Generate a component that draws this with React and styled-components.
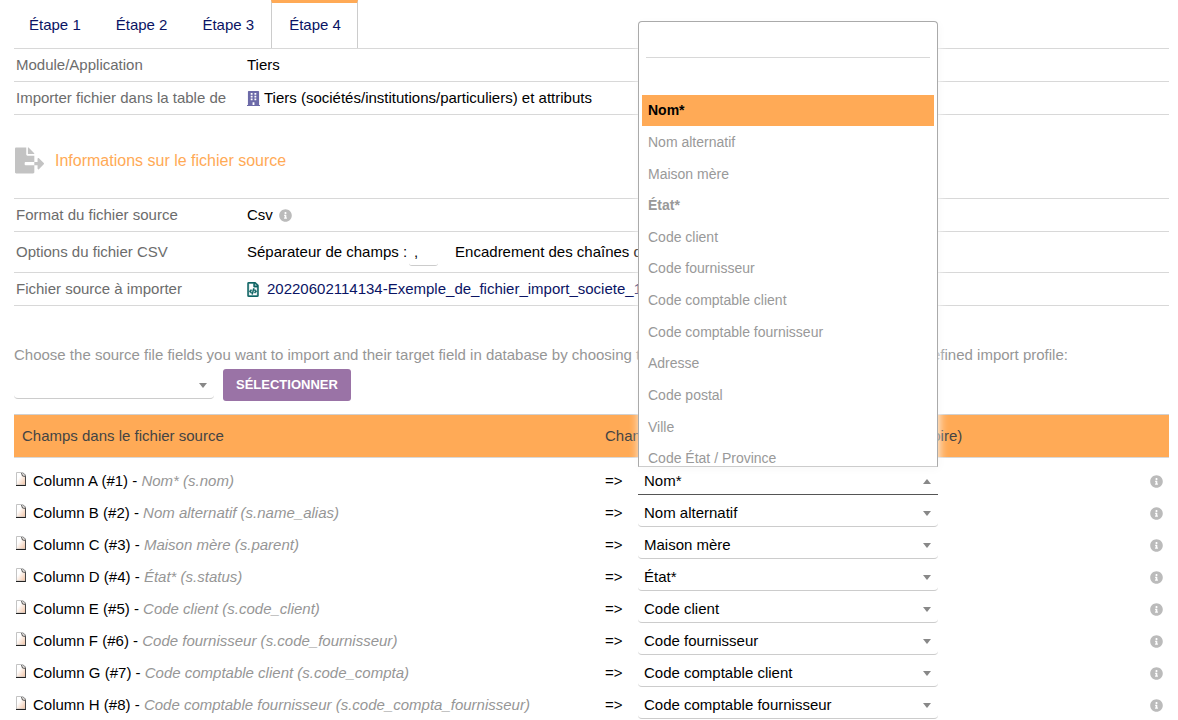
import React, { useState } from 'react'
import styled, { createGlobalStyle } from 'styled-components'
import { FaBuilding, FaFileExport, FaInfoCircle, FaRegFileCode } from 'react-icons/fa'

const GlobalStyle = createGlobalStyle`
  * {
    box-sizing: border-box;
  }

  body {
    margin: 0;
    background: #fff;
    color: #000;
    font: 15px/20px "Liberation Sans", Arial, sans-serif;
  }

  input, select, button {
    font: inherit;
    color: inherit;
  }
`

const Page = styled.main`
  padding: 0 9px 0 14px;
`

const Tabs = styled.nav`
  display: flex;
  margin: 0 -3px;
`

const TabLink = styled.a`
  height: 48px;
  padding: 12px 16px 0 17px;
  border-top: 3px solid ${({ $active }) => ($active ? '#ffaa56' : 'transparent')};
  border-left: 1px solid ${({ $active }) => ($active ? '#ccc' : 'transparent')};
  border-right: 1px solid ${({ $active }) => ($active ? '#ccc' : 'transparent')};
  color: #0a1464;
  text-decoration: none;
`

const InfoTable = styled.table`
  width: 100%;
  border-collapse: separate;
  border-spacing: 0;
  border-top: 1px solid #d8d8d8;

  th, td {
    height: 33px;
    padding: 0 2px;
    border-bottom: 1px solid #d8d8d8;
    text-align: left;
    font-weight: normal;
    white-space: nowrap;
  }

  th {
    width: 20%;
    color: #6c6c6c;
  }

  tr.tall > * {
    height: 41px;
  }
`

const Inline = styled.div`
  display: flex;
  align-items: center;
  gap: ${({ $gap }) => $gap}px;
`

const BuildingIcon = styled(FaBuilding)`
  width: 13px;
  height: 15px;
  color: #6c6aa8;
`

const FileCodeIcon = styled(FaRegFileCode)`
  width: 12px;
  height: 15px;
  color: #0f6464;
  stroke-width: 14px;
`

const SectionTitle = styled.h2`
  display: flex;
  align-items: center;
  gap: 11px;
  height: 83px;
  margin: 0;
  padding: 8px 0 0 1px;
  color: #ffaa56;
  font-size: 16px;
  font-weight: normal;
  line-height: 20px;

  svg {
    color: #c3c3c3;
  }
`

const CharInput = styled.input`
  width: 29px;
  height: 28px;
  margin: 0 17px 0 2px;
  padding: 0 5px;
  border: 0;
  border-bottom: 1px solid #ccc;
  border-radius: 3px;
  background: transparent;
`

const FileLink = styled.a`
  color: #0a1464;
  text-decoration: none;
`

const Hint = styled.p`
  margin: 39px 0 0;
  color: #969696;
`

const ProfileForm = styled.form`
  display: flex;
  align-items: center;
  gap: 9px;
  margin: 4px 0 13px;
`

const SubmitButton = styled.button`
  height: 32px;
  padding: 0 13px;
  border: 0;
  border-radius: 3px;
  background: #9a73a6;
  color: #fff;
  font-size: 13px;
  font-weight: bold;
  text-transform: uppercase;
`

const SelectBox = styled.div`
  position: relative;
  display: grid;
  align-items: center;
  width: ${({ $width }) => $width}px;

  > * {
    grid-area: 1 / 1;
  }
`

const Select = styled.select`
  width: 100%;
  height: 28px;
  padding: 0 24px 0 6px;
  appearance: none;
  border: 0;
  border-bottom: 1px solid ${({ $open }) => ($open ? '#555' : '#ccc')};
  border-radius: ${({ $open }) => ($open ? 0 : 4)}px;
  background: transparent;
  outline: none;
`

const Arrow = styled.span`
  justify-self: end;
  margin-right: 7px;
  border: 4px solid transparent;
  border-width: ${({ $up }) => ($up ? '0 4px 5px' : '5px 4px 0')};
  border-top-color: ${({ $up }) => ($up ? 'transparent' : '#888')};
  border-bottom-color: ${({ $up }) => ($up ? '#888' : 'transparent')};
  pointer-events: none;
`

const Dropdown = styled.div`
  position: absolute;
  z-index: 10;
  bottom: 100%;
  left: 0;
  width: 100%;
  height: 446px;
  overflow: hidden;
  border: 1px solid #aaa;
  border-bottom-color: #ccc;
  border-radius: 4px 4px 0 0;
  background: #fff;
  box-shadow: 1px 2px 10px #f8f8f8;
`

const Search = styled.input`
  display: block;
  width: calc(100% - 14px);
  height: 30px;
  margin: 6px 7px 5px;
  border: 0;
  border-bottom: 1px solid #d8d8d8;
  outline: none;
`

const Options = styled.ul`
  display: grid;
  grid-auto-rows: 1fr;
  height: 411px;
  margin: 0 3px;
  padding: 0;
  list-style: none;
`

const Option = styled.li`
  display: flex;
  align-items: center;
  padding: 0 6px;
  background: ${({ $active }) => ($active ? '#ffaa56' : 'transparent')};
  color: ${({ $active }) => ($active ? '#000' : '#999')};
  font-size: 14px;
  font-weight: ${({ $bold }) => ($bold ? 'bold' : 'normal')};
`

const MappingTable = styled.table`
  width: 100%;
  table-layout: fixed;
  border-collapse: separate;
  border-spacing: 0;

  td {
    height: 32px;
    padding: 0;
  }

  td:first-child {
    padding-left: 2px;
  }

  tbody::before {
    content: '';
    display: block;
    height: 7px;
  }
`

const Col = styled.col`
  width: ${({ $width }) => $width};
`

const HeadCell = styled.th`
  height: 44px;
  padding: 0 0 0 ${({ $indent }) => $indent || 0}px;
  border-top: 1px solid #d0d0d0;
  border-bottom: 1px solid #d8d8d8;
  background: #ffaa56;
  color: #444;
  font-weight: normal;
  text-align: left;
`

const SourceField = styled(Inline)`
  svg {
    margin-bottom: 4px;
  }
`

const Muted = styled.i`
  color: #969696;
`

const InfoCell = styled.td`
  svg {
    display: block;
    margin: 1px 6px 0 auto;
    color: #bbb;
  }
`

const PageGlyph = () => (
  <svg width="11" height="14" viewBox="0 0 11 14" aria-hidden="true">
    <defs>
      <linearGradient id="paper" x1="0" y1="0" x2="1" y2="1">
        <stop offset="0.35" stopColor="#fff" />
        <stop offset="1" stopColor="#f0c0a0" />
      </linearGradient>
    </defs>
    <path d="M.5.5h5.500l3.500 3.500v9h-9z" fill="url(#paper)" stroke="#c4c4c4" />
    <path d="M0 13.500h10" fill="none" stroke="#222" />
    <path d="M9.500 13.500v-10" fill="none" stroke="#444" />
    <path d="M5.500 1l1 3 3.500.5" fill="none" stroke="#555" />
    <path d="M6.500.5l3.500 3" fill="none" stroke="#888" />
  </svg>
)

const FIELDS = [
  { label: 'Nom*', column: 's.nom', bold: true },
  { label: 'Nom alternatif', column: 's.name_alias' },
  { label: 'Maison mère', column: 's.parent' },
  { label: 'État*', column: 's.status', bold: true },
  { label: 'Code client', column: 's.code_client' },
  { label: 'Code fournisseur', column: 's.code_fournisseur' },
  { label: 'Code comptable client', column: 's.code_compta' },
  { label: 'Code comptable fournisseur', column: 's.code_compta_fournisseur' },
  { label: 'Adresse' },
  { label: 'Code postal' },
  { label: 'Ville' },
  { label: 'Code État / Province' },
]

const STEPS = [1, 2, 3, 4]

const FieldSelect = ({ label, width, value, onChange, open, children }) => (
  <SelectBox $width={width}>
    <Select aria-label={label} value={value} onChange={onChange} $open={open}>
      <option value="" />
      {FIELDS.map(field => <option key={field.label}>{field.label}</option>)}
    </Select>
    <Arrow $up={open} />
    {children}
  </SelectBox>
)

const FieldDropdown = ({ value, onPick }) => (
  <Dropdown>
    <Search type="search" aria-label="Rechercher un champ" />
    <Options role="listbox" aria-label="Champs cibles">
      <Option role="option" />
      {FIELDS.map(({ label, bold }) => (
        <Option
          key={label}
          role="option"
          aria-selected={label === value}
          $active={label === value}
          $bold={bold}
          onClick={() => onPick(label)}
        >
          {label}
        </Option>
      ))}
    </Options>
  </Dropdown>
)

const App = () => {
  const rows = FIELDS.filter(field => field.column)
  const [targets, setTargets] = useState(rows.map(row => row.label))
  const [openRow, setOpenRow] = useState(0)
  const [profile, setProfile] = useState('')

  const setTarget = (index, label) =>
    setTargets(targets.map((target, i) => (i === index ? label : target)))

  return (
    <Page>
      <GlobalStyle />
      <Tabs>
        {STEPS.map(step => (
          <TabLink key={step} href={`#step${step}`} $active={step === 4}>Étape {step}</TabLink>
        ))}
      </Tabs>

      <InfoTable>
        <tbody>
          <tr>
            <th scope="row">Module/Application</th>
            <td>Tiers</td>
          </tr>
          <tr>
            <th scope="row">Importer fichier dans la table de</th>
            <td>
              <Inline $gap={4}>
                <BuildingIcon />
                Tiers (sociétés/institutions/particuliers) et attributs
              </Inline>
            </td>
          </tr>
        </tbody>
      </InfoTable>

      <SectionTitle>
        <FaFileExport size={29} />
        Informations sur le fichier source
      </SectionTitle>

      <InfoTable>
        <tbody>
          <tr>
            <th scope="row">Format du fichier source</th>
            <td>
              <Inline $gap={6}>
                Csv
                <FaInfoCircle size={13} color="#bbb" />
              </Inline>
            </td>
          </tr>
          <tr className="tall">
            <th scope="row">Options du fichier CSV</th>
            <td>
              <Inline $gap={0}>
                <label htmlFor="separator">Séparateur de champs :</label>
                <CharInput id="separator" defaultValue="," />
                <label htmlFor="enclosure">Encadrement des chaînes de caractères :</label>
                <CharInput id="enclosure" defaultValue={'"'} />
              </Inline>
            </td>
          </tr>
          <tr>
            <th scope="row">Fichier source à importer</th>
            <td>
              <Inline $gap={8}>
                <FileCodeIcon />
                <FileLink href="#source">20220602114134-Exemple_de_fichier_import_societe_1(1).csv</FileLink>
              </Inline>
            </td>
          </tr>
        </tbody>
      </InfoTable>

      <Hint>
        Choose the source file fields you want to import and their target field in database by choosing the
        fields in each select box, or select a predefined import profile:
      </Hint>
      <ProfileForm onSubmit={e => e.preventDefault()}>
        <FieldSelect
          label="Profil d'import"
          width={200}
          value={profile}
          onChange={e => setProfile(e.target.value)}
        />
        <SubmitButton type="submit">Sélectionner</SubmitButton>
      </ProfileForm>

      <MappingTable>
        <colgroup>
          <Col $width="591px" />
          <Col $width="33px" />
          <Col $width="auto" />
          <Col $width="40px" />
        </colgroup>
        <thead>
          <tr>
            <HeadCell $indent={8}>Champs dans le fichier source</HeadCell>
            <HeadCell colSpan={2}>Champs dans la base Dolibarr (* = champ obligatoire)</HeadCell>
            <HeadCell />
          </tr>
        </thead>
        <tbody>
          {rows.map((row, index) => (
            <tr key={row.column}>
              <td>
                <SourceField $gap={6}>
                  <PageGlyph />
                  <span>
                    Column {String.fromCharCode(65 + index)} (#{index + 1}) - <Muted>{row.label} ({row.column})</Muted>
                  </span>
                </SourceField>
              </td>
              <td>=&gt;</td>
              <td>
                <FieldSelect
                  label={`Champ cible ${index + 1}`}
                  width={300}
                  value={targets[index]}
                  onChange={e => setTarget(index, e.target.value)}
                  open={openRow === index}
                >
                  {openRow === index && (
                    <FieldDropdown
                      value={targets[index]}
                      onPick={label => {
                        setTarget(index, label)
                        setOpenRow(null)
                      }}
                    />
                  )}
                </FieldSelect>
              </td>
              <InfoCell>
                <FaInfoCircle size={13} />
              </InfoCell>
            </tr>
          ))}
        </tbody>
      </MappingTable>
    </Page>
  )
}

export default App
